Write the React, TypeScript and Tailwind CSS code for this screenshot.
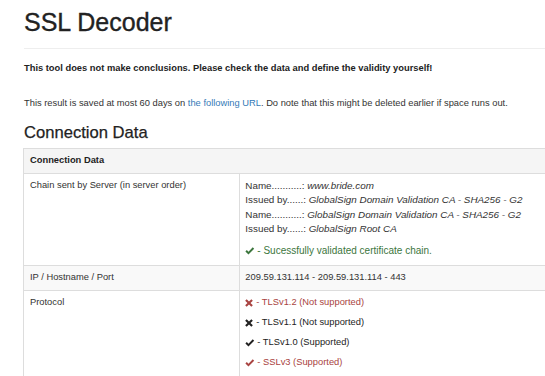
import React from "react";

function OkIcon({ className }: { className?: string }) {
  return (
    <svg viewBox="0 0 12 10" className={className} fill="currentColor">
      <path d="M0.5 5.5 L2.3 3.8 L4.4 5.9 L9.8 0.4 L11.6 2.2 L4.4 9.5 Z" />
    </svg>
  );
}

function RemoveIcon({ className }: { className?: string }) {
  return (
    <svg viewBox="0 0 10 10" className={className} fill="currentColor">
      <path d="M2.1 0.2 L5 3.1 L7.9 0.2 L9.8 2.1 L6.9 5 L9.8 7.9 L7.9 9.8 L5 6.9 L2.1 9.8 L0.2 7.9 L3.1 5 L0.2 2.1 Z" />
    </svg>
  );
}

const protocols = [
  { label: "TLSv1.2 (Not supported)", ok: false, color: "text-[#a94442]" },
  { label: "TLSv1.1 (Not supported)", ok: false, color: "text-[#222]" },
  { label: "TLSv1.0 (Supported)", ok: true, color: "text-[#222]" },
  { label: "SSLv3 (Supported)", ok: true, color: "text-[#a94442]" },
];

export default function App() {
  return (
    <div className="w-[545px] h-[376px] overflow-hidden bg-white font-['Liberation_Sans',Arial,sans-serif] text-[#333] text-[9.33px] leading-[13.33px]">
      <div className="pl-[24px]">
        <h1 className="mt-[9px] pb-[11px] border-b border-[#eee] text-[25px] leading-[27.5px] text-[#222] [-webkit-text-stroke:0.35px_#222]">
          SSL Decoder
        </h1>

        <p className="mt-[13.3px] font-bold text-[#222]">
          This tool does not make conclusions. Please check the data and define the validity yourself!
        </p>

        <p className="mt-[21.5px]">
          This result is saved at most 60 days on{" "}
          <a className="text-[#337ab7]">the following URL</a>. Do note that this might be deleted earlier if space
          runs out.
        </p>

        <h3 className="mt-[14px] text-[16.6px] leading-[18px] text-[#222] [-webkit-text-stroke:0.25px_#222]">
          Connection Data
        </h3>

        {/* Connection data table */}
        <div className="w-[620px] -ml-px mt-[6px] border border-[#ddd]">
          <div className="bg-[#f5f5f5] px-[6px] py-[5.33px] font-bold text-[#222]">Connection Data</div>

          <div className="grid grid-cols-[215px_1fr] border-t border-[#ddd]">
            <div className="px-[6px] pt-[5.33px]">Chain sent by Server (in server order)</div>
            <div className="border-l border-[#ddd] pl-[5.33px] pt-[5px] pb-[6.5px] text-[9.85px] leading-[14.28px]">
              <div>
                Name...........: <i>www.bride.com</i>
              </div>
              <div>
                Issued by......: <i>GlobalSign Domain Validation CA - SHA256 - G2</i>
              </div>
              <div>
                Name...........: <i>GlobalSign Domain Validation CA - SHA256 - G2</i>
              </div>
              <div>
                Issued by......: <i>GlobalSign Root CA</i>
              </div>
              <p className="mt-[8px] text-[10px] text-[#3c763d] flex items-center">
                <OkIcon className="w-[9.5px] h-[8px] mr-[2.5px]" />- Sucessfully validated certificate chain.
              </p>
            </div>
          </div>

          <div className="grid grid-cols-[215px_1fr] border-t border-[#ddd] bg-[#f9f9f9]">
            <div className="px-[6px] py-[5.33px]">IP / Hostname / Port</div>
            <div className="border-l border-[#ddd] pl-[5.33px] py-[5.33px]">
              209.59.131.114 - 209.59.131.114 - 443
            </div>
          </div>

          <div className="grid grid-cols-[215px_1fr] border-t border-[#ddd]">
            <div className="px-[6px] pt-[5.5px]">Protocol</div>
            <div className="border-l border-[#ddd] pl-[5.33px] pt-[5.5px] pb-[6px]">
              {protocols.map((p) => (
                <p key={p.label} className={`mb-[6.67px] flex items-center ${p.color}`}>
                  {p.ok ? (
                    <OkIcon className="w-[9.5px] h-[8px] mr-[2.5px]" />
                  ) : (
                    <RemoveIcon className="w-[8px] h-[8px] mr-[3px]" />
                  )}
                  - {p.label}
                </p>
              ))}
            </div>
          </div>
        </div>
      </div>
    </div>
  );
}
